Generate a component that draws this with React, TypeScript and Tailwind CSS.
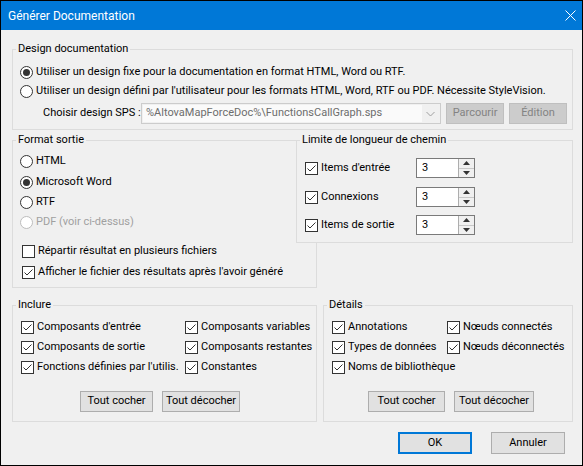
import type { ReactNode } from 'react'

type BoxProps = {
  title: string
  className?: string
  children?: ReactNode
}

function Group({ title, className = '', children }: BoxProps) {
  return (
    <div className={`flex flex-col border border-[#dcdcdc] ${className}`}>
      <div className="-mt-[9px] ml-[3px] w-fit bg-[#f0f0f0] px-[2px] leading-[16px]">{title}</div>
      {children}
    </div>
  )
}

function Radio({ label, checked, disabled }: { label: string; checked?: boolean; disabled?: boolean }) {
  const ring = disabled ? '#bcbcbc' : '#333333'
  return (
    <div className="flex h-[20px] items-center">
      <svg width="13" height="13" viewBox="0 0 13 13" className="shrink-0">
        <circle cx="6.5" cy="6.5" r="6" fill="#ffffff" stroke={ring} strokeWidth="1" />
        {checked && <circle cx="6.5" cy="6.5" r="3.5" fill="#333333" />}
      </svg>
      <span className={`ml-[3px] whitespace-nowrap ${disabled ? 'text-[#a0a0a0]' : ''}`}>{label}</span>
    </div>
  )
}

function Check({ label, checked = true, className = '' }: { label: string; checked?: boolean; className?: string }) {
  return (
    <div className={`flex h-[20px] items-center ${className}`}>
      <svg width="13" height="13" viewBox="0 0 13 13" className="shrink-0">
        <rect x="0.5" y="0.5" width="12" height="12" fill="#ffffff" stroke="#333333" strokeWidth="1" />
        {checked && (
          <polyline points="2.5,6.5 5,9 10.5,3.5" fill="none" stroke="#333333" strokeWidth="1" />
        )}
      </svg>
      <span className="ml-[3px] whitespace-nowrap">{label}</span>
    </div>
  )
}

function Spin({ value }: { value: string }) {
  return (
    <div className="flex h-[20px] w-[59px] border border-[#7a7a7a] bg-white">
      <div className="flex flex-1 items-center pl-[5px]">{value}</div>
      <div className="flex w-[16px] flex-col border-l border-[#adadad] bg-[#f0f0f0]">
        <div className="flex flex-1 items-center justify-center border-b border-[#c8c8c8]">
          <svg width="7" height="4" viewBox="0 0 7 4"><polygon points="0,4 7,4 3.5,0" fill="#333" /></svg>
        </div>
        <div className="flex flex-1 items-center justify-center">
          <svg width="7" height="4" viewBox="0 0 7 4"><polygon points="0,0 7,0 3.5,4" fill="#333" /></svg>
        </div>
      </div>
    </div>
  )
}

function Button({ label, className = '', disabled, primary }: { label: string; className?: string; disabled?: boolean; primary?: boolean }) {
  const look = disabled
    ? 'border border-[#bfbfbf] bg-[#cccccc] text-[#838383]'
    : primary
      ? 'border-2 border-[#0078d7] bg-[#e1e1e1]'
      : 'border border-[#adadad] bg-[#e1e1e1]'
  return (
    <div className={`flex items-center justify-center whitespace-nowrap ${look} ${className}`}>{label}</div>
  )
}

export default function App() {
  return (
    <div className="flex h-[466px] w-[583px] flex-col border border-black bg-[#f0f0f0] font-['Roboto',sans-serif] text-[11px] text-black">
      <div className="flex h-[29px] shrink-0 items-center justify-between bg-[#0078d7] pl-[7px] pr-[5px] text-[12px] text-white">
        <span>Générer Documentation</span>
        <svg width="11" height="11" viewBox="0 0 11 11" className="mr-[1px]">
          <path d="M0.5 0.5 L10.5 10.5 M10.5 0.5 L0.5 10.5" stroke="#ffffff" strokeWidth="1" />
        </svg>
      </div>

      <div className="flex flex-1 flex-col pl-[11px] pr-[9px]">
        <Group title="Design documentation" className="mt-[19px] h-[81px]">
          <div className="mt-[5px] pl-[7px]">
            <div className="h-[19px]">
              <Radio checked label="Utiliser un design fixe pour la documentation en format HTML, Word ou RTF." />
            </div>
            <div className="h-[19px]">
              <Radio label="Utiliser un design défini par l'utilisateur pour les formats HTML, Word, RTF ou PDF. Nécessite StyleVision." />
            </div>
          </div>
          <div className="mt-[3px] flex h-[21px] items-stretch pl-[30px]">
            <div className="flex w-[98px] items-center whitespace-nowrap">Choisir design SPS :</div>
            <div className="flex w-[300px] items-center border border-[#cccccc] bg-[#f0f0f0] p-[1px] text-[#6d6d6d]">
              <div className="flex h-full flex-1 items-center bg-[#fafafa] pl-[3px]">%AltovaMapForceDoc%\FunctionsCallGraph.sps</div>
              <svg width="17" height="8" viewBox="0 0 17 8" className="shrink-0">
                <polyline points="4.5,2 8.5,6 12.5,2" fill="none" stroke="#a0a0a0" strokeWidth="1" />
              </svg>
            </div>
            <Button disabled label="Parcourir" className="ml-[5px] w-[58px]" />
            <Button disabled label="Édition" className="ml-[5px] w-[58px]" />
          </div>
        </Group>

        <div className="mt-[10px] flex items-start">
          <Group title="Format sortie" className="h-[148px] w-[305px] shrink-0">
            <div className="mt-[3px] pl-[7px]">
              <div className="mb-[1px]"><Radio label="HTML" /></div>
              <Radio checked label="Microsoft Word" />
              <Radio label="RTF" />
              <Radio disabled label="PDF (voir ci-dessus)" />
            </div>
            <div className="mt-[9px] pl-[9px]">
              <Check checked={false} label="Répartir résultat en plusieurs fichiers" />
              <Check className="mt-[1px]" label="Afficher le fichier des résultats après l'avoir généré" />
            </div>
          </Group>

          <Group title="Limite de longueur de chemin" className="relative z-10 -ml-[21px] h-[103px] w-[277px] shrink-0 bg-[#f0f0f0]">
            <div className="pl-[8px]">
              <div className="mt-[10px] flex items-center">
                <Check label="Items d'entrée" className="w-[111px]" />
                <Spin value="3" />
              </div>
              <div className="mt-[9px] flex items-center">
                <Check label="Connexions" className="w-[111px]" />
                <Spin value="3" />
              </div>
              <div className="mt-[8px] flex items-center">
                <Check label="Items de sortie" className="w-[111px]" />
                <Spin value="3" />
              </div>
            </div>
          </Group>
        </div>

        <div className="mt-[17px] flex">
          <Group title="Inclure" className="h-[117px] w-[305px] shrink-0">
            <div className="mt-[4px] grid grid-cols-[164px_1fr] pl-[8px]">
              <Check label="Composants d'entrée" />
              <Check label="Composants variables" />
              <Check label="Composants de sortie" />
              <Check label="Composants restantes" />
              <Check label="Fonctions définies par l'utilis." />
              <Check label="Constantes" />
            </div>
            <div className="mt-[14px] flex pl-[67px]">
              <Button label="Tout cocher" className="h-[21px] w-[73px]" />
              <Button label="Tout décocher" className="ml-[9px] h-[21px] w-[78px]" />
            </div>
          </Group>

          <Group title="Détails" className="ml-[6px] h-[117px] flex-1">
            <div className="mt-[4px] grid grid-cols-[115px_1fr] pl-[8px]">
              <Check label="Annotations" />
              <Check label="Nœuds connectés" />
              <Check label="Types de données" />
              <Check label="Nœuds déconnectés" />
              <Check label="Noms de bibliothèque" />
            </div>
            <div className="mt-[14px] flex pl-[44px]">
              <Button label="Tout cocher" className="h-[21px] w-[77px]" />
              <Button label="Tout décocher" className="ml-[9px] h-[21px] w-[80px]" />
            </div>
          </Group>
        </div>

        <div className="mt-[10px] flex justify-end pr-[8px]">
          <Button primary label="OK" className="h-[22px] w-[74px]" />
          <Button label="Annuler" className="ml-[19px] h-[22px] w-[74px]" />
        </div>
      </div>
    </div>
  )
}
